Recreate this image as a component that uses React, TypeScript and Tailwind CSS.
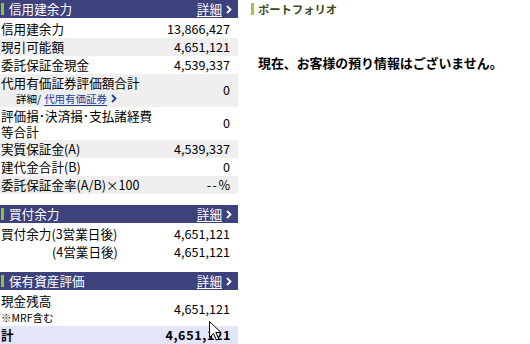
import React from "react";

const FONT = { fontFamily: '"Noto Sans CJK JP", "Noto Sans", sans-serif' };

function Chevron({ color }: { color: string }) {
  return (
    <svg width="6" height="9" viewBox="0 0 6 9" className="ml-[4px]">
      <polyline points="1,1 4.5,4.5 1,8" fill="none" stroke={color} strokeWidth="1.8" />
    </svg>
  );
}

function Header({ title }: { title: string }) {
  return (
    <div className="h-[18px] bg-[#3d427d] flex items-center justify-between pr-[6px] text-white">
      <div className="flex items-center">
        <span className="ml-px w-[3px] h-[12px] bg-[#8fc13e]" />
        <span className="ml-[5px] leading-[18px]">{title}</span>
      </div>
      <a className="flex items-center leading-[18px] cursor-pointer">
        <span className="underline underline-offset-2">詳細</span>
        <Chevron color="#ffffff" />
      </a>
    </div>
  );
}

function Row({
  label,
  value,
  gray,
}: {
  label: React.ReactNode;
  value: React.ReactNode;
  gray?: boolean;
}) {
  return (
    <div
      className={`h-[18px] flex items-center justify-between pl-px pr-[8px] leading-[18px] ${
        gray ? "bg-[#efefef]" : "bg-white"
      }`}
    >
      <span className="whitespace-nowrap">{label}</span>
      <span className="whitespace-nowrap">{value}</span>
    </div>
  );
}

function Row2({
  line1,
  line2,
  value,
  gray,
  h = "h-[33px]",
}: {
  line1: React.ReactNode;
  line2: React.ReactNode;
  value: React.ReactNode;
  gray?: boolean;
  h?: string;
}) {
  return (
    <div
      className={`${h} flex items-center justify-between pl-px pr-[8px] ${
        gray ? "bg-[#efefef]" : "bg-white"
      }`}
    >
      <div className="flex flex-col">
        <span className="leading-[17px] whitespace-nowrap">{line1}</span>
        <span className="leading-[16px] whitespace-nowrap">{line2}</span>
      </div>
      <span className="leading-[18px] whitespace-nowrap">{value}</span>
    </div>
  );
}

export default function App() {
  return (
    <div
      className="relative w-[530px] h-[344px] overflow-hidden bg-white flex text-black text-[12.6px]"
      style={FONT}
    >
      <div className="w-[238px] flex flex-col shrink-0">
        <Header title="信用建余力" />
        <div className="h-[2px]" />
        <Row label="信用建余力" value="13,866,427" />
        <Row label="現引可能額" value="4,651,121" gray />
        <Row label="委託保証金現金" value="4,539,337" />
        <Row2
          gray
          line1="代用有価証券評価額合計"
          line2={
            <span className="text-[10.5px] flex items-center pl-[15px]">
              <span>詳細/</span>
              <a className="ml-[3px] text-[#1d3f9e] underline underline-offset-2 cursor-pointer">
                代用有価証券
              </a>
              <Chevron color="#1d3f9e" />
            </span>
          }
          value="0"
        />
        <Row2 line1="評価損･決済損･支払諸経費" line2="等合計" value="0" />
        <Row label="実質保証金(A)" value="4,539,337" gray />
        <Row label="建代金合計(B)" value="0" />
        <Row
          label="委託保証金率(A/B)×100"
          value={<span className="tracking-[1.5px] -mr-[1.5px]">--%</span>}
          gray
        />

        <div className="h-[12px]" />
        <Header title="買付余力" />
        <div className="h-[2px]" />
        <Row label="買付余力(3営業日後)" value="4,651,121" />
        <Row label={<span className="pl-[51px]">(4営業日後)</span>} value="4,651,121" />

        <div className="h-[12px]" />
        <Header title="保有資産評価" />
        <div className="h-[2px]" />
        <Row2
          h="h-[34px]"
          line1="現金残高"
          line2={<span className="text-[10.5px]">※MRF含む</span>}
          value="4,651,121"
        />
        <div className="h-[18px] flex items-center justify-between pl-px pr-[7px] leading-[18px] bg-[#e3e5f8] font-bold">
          <span>計</span>
          <span className="tracking-[0.6px]">4,651,121</span>
        </div>
      </div>

      <div className="flex-1 pl-[13px] flex flex-col">
        <div className="h-[18px] flex items-center">
          <span className="w-[3px] h-[12px] bg-[#9acd32]" />
          <span className="ml-[4px] text-[11.3px] font-bold text-[#3b4a1c] leading-[18px]">
            ポートフォリオ
          </span>
        </div>
        <div className="mt-[36px] pl-[7px] text-[12.9px] font-bold leading-[18px] whitespace-nowrap">
          現在、お客様の預り情報はございません。
        </div>
      </div>

      <svg
        className="absolute left-[209px] top-[321px]"
        width="13"
        height="21"
        viewBox="0 0 13 21"
      >
        <polygon
          points="0.5,0.5 0.5,16.5 4.5,12.5 7.5,19 9.8,18 6.8,11.5 12,11.5"
          fill="#ffffff"
          stroke="#000000"
          strokeWidth="1"
        />
      </svg>
    </div>
  );
}
